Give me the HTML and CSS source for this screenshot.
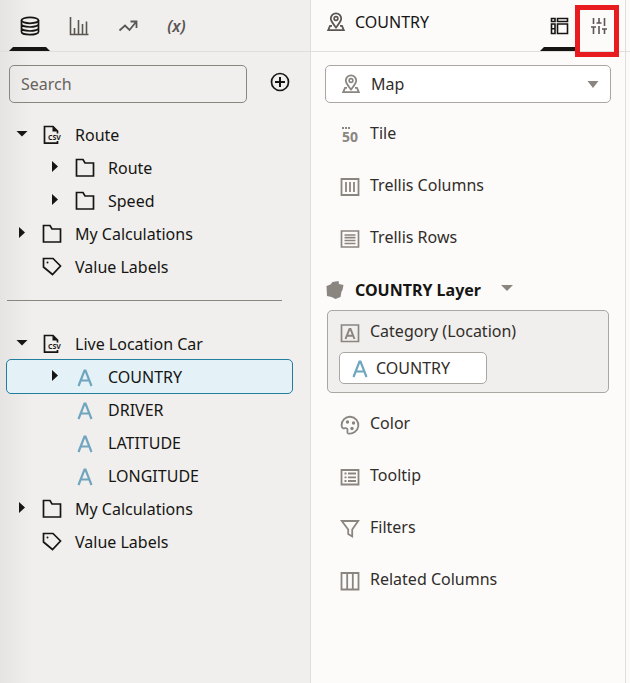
FILE: index.html
```html
<!DOCTYPE html>
<html lang="en">
<head>
<meta charset="utf-8">
<meta name="viewport" content="width=device-width, initial-scale=1">
<title>Workbook</title>
<link rel="stylesheet" href="styles.css">
</head>
<body>
<svg class="defs" aria-hidden="true">
  <symbol id="right" viewBox="0 0 20 20"><path d="M7 3v11l6-5.500z" fill="#161513"/></symbol>
  <symbol id="down" viewBox="0 0 20 20"><path d="M4.500 6h11L10 11.500z" fill="#161513"/></symbol>
  <symbol id="folder" viewBox="0 0 20 20"><path d="M1.500 1.500h6.500l2 3.500h8.500v13h-17z" fill="none" stroke="#161513" stroke-width="1.700"/></symbol>
  <symbol id="tag" viewBox="0 0 20 20"><path d="M1.500 1.500h9.500l7.500 7.500-8 8.500-9-7.500z" fill="none" stroke="#161513" stroke-width="1.700"/><circle cx="5.500" cy="5.500" r="1" fill="#161513"/></symbol>
  <symbol id="attr" viewBox="0 0 20 20"><path d="M3.500 19L9.500 3.500h1l6 15.500M5.500 13.500h9" fill="none" stroke="#6fa5bf" stroke-width="2.200"/></symbol>
  <symbol id="map" viewBox="0 0 20 20"><path d="M10 15.500C7 11.500 4.800 9.300 4.800 6.500a5.200 5.200 0 0 1 10.400 0c0 2.800-2.200 5-5.200 9z" fill="none" stroke="currentColor" stroke-width="1.800"/><circle cx="10" cy="6.500" r="1.900" fill="none" stroke="currentColor" stroke-width="1.600"/><path d="M6 13.800H4L2.200 18.200h15.600L16 13.800h-2" fill="none" stroke="currentColor" stroke-width="1.800"/></symbol>
</svg>

<main class="app">
  <section class="data" aria-label="Data">
    <nav class="tabs">
      <button class="tab active" aria-label="Data"><svg viewBox="0 0 20 20"><g fill="none" stroke="#161513" stroke-width="1.700"><ellipse cx="10" cy="4.300" rx="8.500" ry="3"/><path d="M1.500 4.300v11.400c0 1.700 3.800 3 8.500 3s8.500-1.300 8.500-3V4.300M1.500 8c0 1.700 3.800 3 8.500 3s8.500-1.300 8.500-3M1.500 12c0 1.700 3.800 3 8.500 3s8.500-1.300 8.500-3"/></g></svg></button>
      <button class="tab" aria-label="Visualizations"><svg viewBox="0 0 20 20"><path d="M1.500 1v17.500h18M5.500 18V12M9.500 18V4M13.500 18V8M17.500 18V5.500" fill="none" stroke="#5b5652" stroke-width="1.600"/></svg></button>
      <button class="tab" aria-label="Analytics"><svg viewBox="0 0 20 20"><path d="M1.500 14.500l5.500-5 4.500 4.500 6.500-8M12.500 5.500h6v6.500" fill="none" stroke="#5b5652" stroke-width="1.800"/></svg></button>
      <button class="tab formula" aria-label="Parameters">(x)</button>
    </nav>
    <div class="search">
      <input type="text" placeholder="Search" aria-label="Search">
      <button class="add" aria-label="Add data"><svg viewBox="0 0 20 20"><path d="M10 5v10M5 10h10" stroke="#161513" stroke-width="2"/><circle cx="10" cy="10" r="8.500" fill="none" stroke="#161513" stroke-width="1.700"/></svg></button>
    </div>
    <div class="tree">
      <ul>
        <li class="row"><button aria-label="Collapse"><svg><use href="#down"/></svg></button><svg viewBox="0 0 20 20"><path d="M15.500 16v2.200h-13V1.500h8.500l4.500 4.500v2.500" fill="none" stroke="#161513" stroke-width="1.700"/><path d="M10.500 1.500v5h5.500z" fill="#161513"/><text x="6" y="14.500" font-size="7" font-weight="700" fill="#161513">CSV</text></svg><span>Route</span></li>
        <li class="row child"><button aria-label="Expand"><svg><use href="#right"/></svg></button><svg><use href="#folder"/></svg><span>Route</span></li>
        <li class="row child"><button aria-label="Expand"><svg><use href="#right"/></svg></button><svg><use href="#folder"/></svg><span>Speed</span></li>
        <li class="row"><button aria-label="Expand"><svg><use href="#right"/></svg></button><svg><use href="#folder"/></svg><span>My Calculations</span></li>
        <li class="row"><i></i><svg><use href="#tag"/></svg><span>Value Labels</span></li>
      </ul>
      <hr>
      <ul>
        <li class="row"><button aria-label="Collapse"><svg><use href="#down"/></svg></button><svg viewBox="0 0 20 20"><path d="M15.500 16v2.200h-13V1.500h8.500l4.500 4.500v2.500" fill="none" stroke="#161513" stroke-width="1.700"/><path d="M10.500 1.500v5h5.500z" fill="#161513"/><text x="6" y="14.500" font-size="7" font-weight="700" fill="#161513">CSV</text></svg><span>Live Location Car</span></li>
        <li class="row child selected"><button aria-label="Expand"><svg><use href="#right"/></svg></button><svg><use href="#attr"/></svg><span>COUNTRY</span></li>
        <li class="row child"><i></i><svg><use href="#attr"/></svg><span>DRIVER</span></li>
        <li class="row child"><i></i><svg><use href="#attr"/></svg><span>LATITUDE</span></li>
        <li class="row child"><i></i><svg><use href="#attr"/></svg><span>LONGITUDE</span></li>
        <li class="row"><button aria-label="Expand"><svg><use href="#right"/></svg></button><svg><use href="#folder"/></svg><span>My Calculations</span></li>
        <li class="row"><i></i><svg><use href="#tag"/></svg><span>Value Labels</span></li>
      </ul>
    </div>
  </section>

  <section class="grammar" aria-label="Visualization">
    <header class="head">
      <div class="title">
        <svg><use href="#map"/></svg>
        <h1>COUNTRY</h1>
      </div>
      <button class="tab active" aria-label="Grammar"><svg viewBox="0 0 20 20"><path d="M1.500 2.500h3.500v3H1.500zM7.500 2.500h10v3h-10zM1.500 8h3.500v9.500H1.500zM1.500 12.700h3.500M7.500 8h10v9.500h-10z" fill="none" stroke="#161513" stroke-width="1.600"/></svg></button>
      <button class="tab marked" aria-label="Properties"><svg viewBox="0 0 20 20"><path d="M4.500 2v6M4.500 11v7M2 11h5M10 2v5M10 10v8M7.500 7h5M15.500 2v8M15.500 13v5M13 13h5" fill="none" stroke="#5b5652" stroke-width="1.600"/></svg></button>
    </header>
    <div class="picker">
      <svg class="picker-icon"><use href="#map"/></svg>
      <select aria-label="Visualization type"><option>Map</option></select>
      <svg class="picker-arrow" viewBox="0 0 20 20"><path d="M4.500 7h11L10 14z" fill="#8b8580"/></svg>
    </div>
    <ul class="edges">
      <li><svg viewBox="0 0 20 20"><path d="M2 2h2v2H2zM5 2h2v2H5zM8 2h2v2H8z" fill="#8b8580"/><text x="2" y="17" font-size="14" font-weight="700" fill="#8b8580">50</text></svg><span>Tile</span></li>
      <li><svg viewBox="0 0 20 20"><path d="M1.500 2h17v16h-17zM6 5v10M10 5v10M14 5v10" fill="none" stroke="#8b8580" stroke-width="1.800"/></svg><span>Trellis Columns</span></li>
      <li><svg viewBox="0 0 20 20"><path d="M1.500 2h17v16h-17zM4.500 6h11M4.500 8.700h11M4.500 11.500h11M4.500 14.500h11" fill="none" stroke="#8b8580" stroke-width="1.700"/></svg><span>Trellis Rows</span></li>
    </ul>
    <div class="layer">
      <svg viewBox="0 0 20 20"><path d="M1.500 6l4-1.500 2-2.500 6-1 .5 3 4.500 1-1 5-1 1.500-1 5.500-5 2-4-2-4.500-1z" fill="#8b8580"/></svg>
      <h2>COUNTRY Layer</h2>
      <button aria-label="Layer menu"><svg viewBox="0 0 20 20"><path d="M4 5h12l-6 6z" fill="#8b8580"/></svg></button>
    </div>
    <div class="category">
      <div class="edge"><svg viewBox="0 0 20 20"><path d="M1.500 2h17v16.500h-17z" fill="none" stroke="#8b8580" stroke-width="1.700"/><path d="M5.500 16L9.500 6h1l4 10M7 12.800h6" fill="none" stroke="#8b8580" stroke-width="2"/></svg><span>Category (Location)</span></div>
      <button class="pill"><svg><use href="#attr"/></svg>COUNTRY</button>
    </div>
    <ul class="edges">
      <li><svg viewBox="0 0 20 20"><path d="M1.600 10.500A8.400 8.400 0 1 1 8 18.300c-1-.3-.7-1.300-.5-2.500.3-2-.7-3-2.500-2.600-1.800.4-3.200-.2-3.400-2.700z" fill="none" stroke="#8b8580" stroke-width="1.800"/><circle cx="7.500" cy="7" r="1.700" fill="#8b8580"/><circle cx="13.500" cy="8" r="1.700" fill="#8b8580"/><circle cx="12" cy="13.500" r="1.700" fill="#8b8580"/></svg><span>Color</span></li>
      <li><svg viewBox="0 0 20 20"><path d="M1.500 3h17v14.500h-17zM4.500 6.500h2M8 6.500h8M4.500 10.300h2M8 10.300h8M4.500 14h2M8 14h8" fill="none" stroke="#8b8580" stroke-width="1.800"/></svg><span>Tooltip</span></li>
      <li><svg viewBox="0 0 20 20"><path d="M1.800 2h16.400l-6 8.500v7l-4-2.500v-4.500z" fill="none" stroke="#8b8580" stroke-width="1.800"/></svg><span>Filters</span></li>
      <li><svg viewBox="0 0 20 20"><path d="M1.500 2h17v16.500h-17zM7.200 2v16.500M12.800 2v16.500" fill="none" stroke="#8b8580" stroke-width="1.800"/></svg><span>Related Columns</span></li>
    </ul>
  </section>
  <aside class="canvas"></aside>
</main>
</body>
</html>
```
FILE: styles.css
```css
* { box-sizing: border-box; }

body {
  margin: 0;
  font: 16px/24px "Noto Sans", sans-serif;
  color: #161513;
}

svg { display: block; width: 20px; height: 20px; flex: none; overflow: visible; }
.defs { position: absolute; width: 0; height: 0; }
ul { list-style: none; margin: 0; padding: 0; }
button { border: 0; padding: 0; background: none; font: inherit; color: inherit; }
h1, h2 { margin: 0; font-size: 16px; }

.app {
  display: grid;
  grid-template-columns: minmax(0, 311fr) minmax(0, 315fr) 4px;
  min-height: 100vh;
}

.data {
  background: linear-gradient(90deg, #e5e4e3, #f0efed 32px);
  border-right: 1px solid #dfdedc;
}

.grammar {
  background: #fcfbfa;
  border-right: 1px solid #dfdedc;
}

.canvas {
  background: linear-gradient(#dfdedc, #dfdedc) 0 51px / 100% 1px no-repeat #fcfbfa;
}

.tabs, .head {
  display: flex;
  height: 52px;
  border-bottom: 1px solid #dfdedc;
}

.tabs { padding-left: 5px; }

.tab {
  position: relative;
  width: 49px;
  height: 51px;
  display: flex;
  justify-content: center;
  align-items: center;
}

.tab.active::after {
  content: "";
  position: absolute;
  inset: auto 4px 0;
  height: 4px;
  background: #161513;
  clip-path: polygon(4px 0, calc(100% - 4px) 0, 100% 100%, 0 100%);
}

.formula { font-style: italic; font-weight: 600; color: #5b5652; }

.search {
  display: flex;
  align-items: center;
  gap: 23px;
  padding: 13px 20px 15px 9px;
}

.search input {
  flex: 1;
  min-width: 0;
  height: 38px;
  padding: 0 11px;
  border: 1px solid #8b8580;
  border-radius: 5px;
  background: transparent;
  font: inherit;
}

.search input::placeholder { color: #67625d; opacity: 1; }

.add { padding-bottom: 4px; }

.tree { padding: 0 18px 0 7px; }

.row {
  display: grid;
  grid-template-columns: 29px 32px 1fr;
  align-items: center;
  justify-items: center;
  height: 33px;
}

.row span { justify-self: start; padding-left: 7px; }
.child { padding-left: 33px; }

.selected {
  background: #e4f1f7;
  border-radius: 4px;
  outline: 1px solid #227e9e;
}

.tree hr {
  height: 1px;
  margin: 17px 10px 26px 0;
  border: 0;
  background: #8b8580;
}

.head {
  padding-left: 15px;
  padding-right: 7px;
  color: #5b5652;
}

.title {
  flex: 1;
  display: flex;
  align-items: center;
  gap: 9px;
  padding-bottom: 7px;
}

.title h1 { font-weight: 400; color: #161513; }

.head .tab { width: 39px; }
.head .tab.active::after { inset: auto 0 0; }

.marked::before {
  content: "";
  position: absolute;
  inset: 5px -1px -6px -4px;
  z-index: 1;
  border: 5px solid #e81c1e;
}

.picker {
  position: relative;
  margin: 13px 14px 4px;
  color: #8b8580;
}

.picker select {
  display: block;
  appearance: none;
  width: 100%;
  height: 38px;
  padding: 0 45px;
  border: 1px solid #aaa6a2;
  border-radius: 5px;
  background: #fff;
  font: inherit;
  color: #312d2a;
}

.picker-icon, .picker-arrow { position: absolute; top: 9px; }
.picker-icon { left: 16px; }
.picker-arrow { right: 8px; }

.edges li, .edge {
  display: flex;
  align-items: center;
  gap: 10px;
  color: #312d2a;
}

.edges li { height: 52px; padding-left: 29px; }
.edges svg, .edge svg { margin-top: 4px; }

.layer {
  display: flex;
  align-items: center;
  height: 47px;
  padding: 6px 14px 0;
}

.layer h2 { padding: 0 16px 0 10px; }

.category {
  margin: 0 16px 4px;
  padding: 7px 11px 8px;
  border: 1px solid #aaa6a2;
  border-radius: 5px;
  background: #f0efed;
}

.edge { padding-left: 1px; height: 25px; margin-bottom: 9px; }

.pill {
  display: flex;
  align-items: center;
  gap: 6px;
  width: 148px;
  height: 32px;
  padding-left: 10px;
  border: 1px solid #aaa6a2;
  border-radius: 5px;
  background: #fff;
  color: #312d2a;
}
```
